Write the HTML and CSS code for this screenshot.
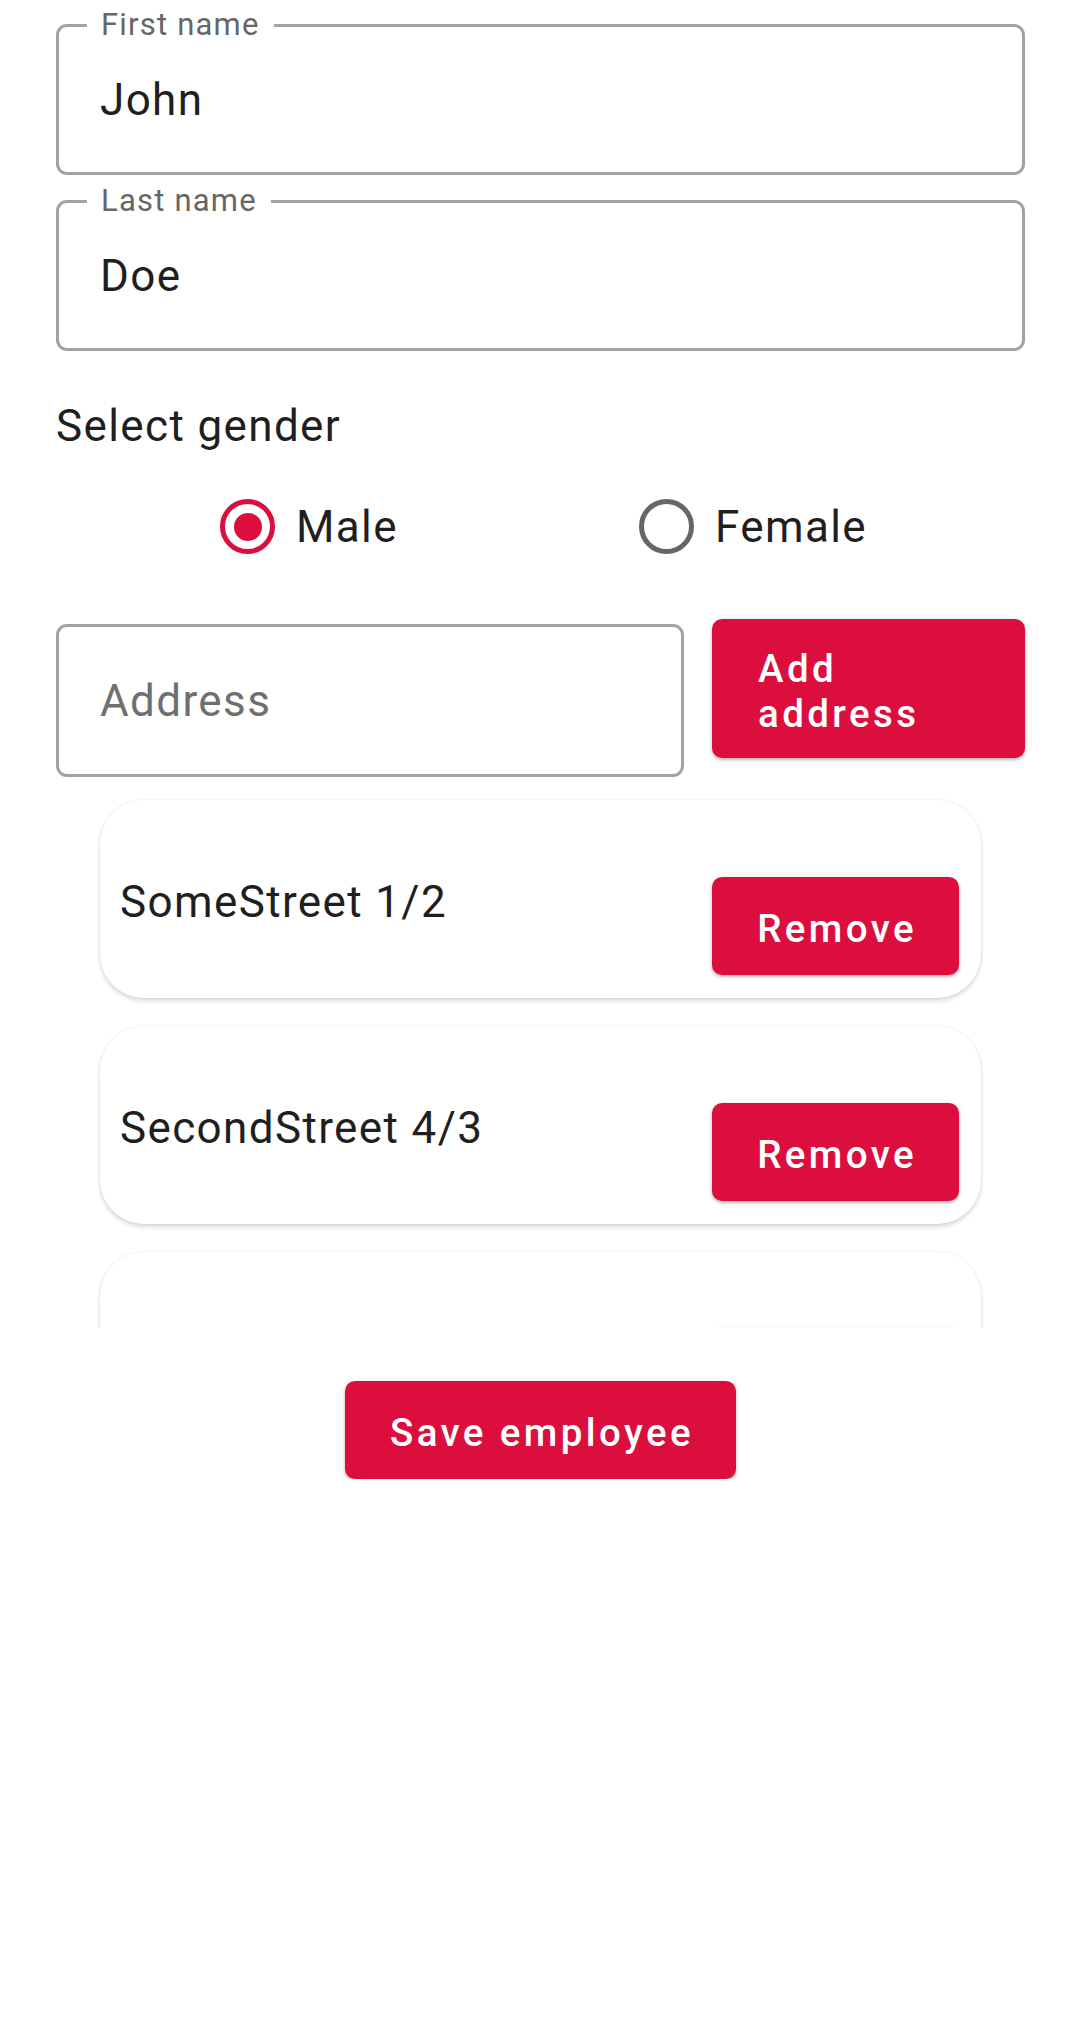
FILE: index.html
```html
<!DOCTYPE html>
<html lang="en">
<head>
<meta charset="utf-8">
<title>Employee form</title>
<link rel="stylesheet" href="styles.css">
</head>
<body>
<main class="form">
  <div class="field">
    <span class="field-label">First name</span>
    <span class="field-value">John</span>
  </div>
  <div class="field">
    <span class="field-label">Last name</span>
    <span class="field-value">Doe</span>
  </div>

  <div class="gender-title">Select gender</div>
  <div class="radio-row">
    <div class="radio-option">
      <span class="radio checked"></span>
      <span class="radio-text">Male</span>
    </div>
    <div class="radio-option">
      <span class="radio"></span>
      <span class="radio-text">Female</span>
    </div>
  </div>

  <div class="address-row">
    <div class="field field-empty">
      <span class="placeholder">Address</span>
    </div>
    <button class="btn btn-add">Add address</button>
  </div>

  <div class="address-list">
    <div class="card">
      <span class="card-text">SomeStreet 1/2</span>
      <button class="btn btn-small">Remove</button>
    </div>
    <div class="card">
      <span class="card-text">SecondStreet 4/3</span>
      <button class="btn btn-small">Remove</button>
    </div>
    <div class="card card-partial">
      <span class="card-text"></span>
      <button class="btn btn-small btn-hidden-part" aria-label="Remove"></button>
    </div>
  </div>

  <div class="save-row">
    <button class="btn btn-small">Save employee</button>
  </div>
</main>
</body>
</html>
```
FILE: styles.css
```css
html, body {
  margin: 0;
  background: #ffffff;
}

body {
  font-family: Roboto, "Noto Sans", "Liberation Sans", sans-serif;
  color: #1f1f1f;
}

.form {
  display: flex;
  flex-direction: column;
  padding: 24px 55px 0 56px;
}

/* Outlined text fields */
.field {
  position: relative;
  box-sizing: border-box;
  height: 151px;
  border: 3px solid #a2a2a2;
  border-radius: 11px;
  display: flex;
  align-items: center;
  padding-left: 41px;
}

.field + .field {
  margin-top: 25px;
}

.field-label {
  position: absolute;
  top: -20px;
  left: 28px;
  padding: 0 14px;
  background: #ffffff;
  font-size: 31px;
  line-height: 36px;
  letter-spacing: 1.2px;
  color: #666666;
}

.field-value,
.placeholder {
  font-size: 44px;
  line-height: 52px;
  letter-spacing: 1.375px;
}

.field-value {
  color: #1f1f1f;
}

.placeholder {
  color: #6f6f6f;
}

/* Gender */
.gender-title {
  margin-top: 49px;
  font-size: 44px;
  line-height: 52px;
  letter-spacing: 1.375px;
  color: #1f1f1f;
}

.radio-row {
  display: grid;
  grid-template-columns: 419px auto;
  align-items: center;
  margin-top: 47px;
  padding-left: 164px;
}

.radio-option {
  display: flex;
  align-items: center;
  gap: 21px;
}

.radio {
  box-sizing: border-box;
  width: 55px;
  height: 55px;
  border: 5px solid #666666;
  border-radius: 50%;
  display: flex;
  align-items: center;
  justify-content: center;
  flex: none;
}

.radio.checked {
  border-color: #dc0e3d;
}

.radio.checked::after {
  content: "";
  width: 28px;
  height: 28px;
  border-radius: 50%;
  background: #dc0e3d;
}

.radio-text {
  font-size: 44px;
  line-height: 52px;
  letter-spacing: 1.375px;
  color: #1f1f1f;
}

/* Address input row */
.address-row {
  display: flex;
  align-items: flex-start;
  gap: 28px;
  margin-top: 65px;
}

.field-empty {
  flex: 1;
  height: 153px;
  margin-top: 5px;
}

/* Buttons */
.btn {
  border: none;
  margin: 0;
  background: #dc0e3d;
  color: #ffffff;
  font-family: Roboto, "Noto Sans", "Liberation Sans", sans-serif;
  font-weight: 500;
  font-size: 38.5px;
  letter-spacing: 3.4px;
  border-radius: 10px;
  box-shadow: 0 2px 3px rgba(0, 0, 0, 0.22), 0 1px 6px rgba(0, 0, 0, 0.10);
  box-sizing: border-box;
  cursor: pointer;
}

.btn-add {
  width: 313px;
  height: 139px;
  flex: none;
  padding: 5px 40px 0 46px;
  text-align: left;
  line-height: 45px;
}

.btn-small {
  height: 98px;
  padding: 5px 42px 0 45px;
  line-height: 45px;
  white-space: nowrap;
  flex: none;
}

.btn-hidden-part {
  width: 246px;
}

/* Address list */
.address-list {
  height: 551px;
  overflow: hidden;
  box-sizing: border-box;
  padding: 23px 44px 0 44px;
  display: flex;
  flex-direction: column;
  gap: 28px;
}

.card {
  flex: none;
  box-sizing: border-box;
  height: 198px;
  padding: 23px 22px 23px 20px;
  border-radius: 44px;
  background: #ffffff;
  box-shadow: 0 3px 4px rgba(0, 0, 0, 0.14), 0 0 3px rgba(0, 0, 0, 0.08);
  display: flex;
  justify-content: space-between;
  align-items: flex-end;
}

.card-text {
  align-self: center;
  margin-top: 6px;
  font-size: 44px;
  line-height: 52px;
  letter-spacing: 1.375px;
  color: #1f1f1f;
}

/* Save */
.save-row {
  display: flex;
  justify-content: center;
  margin-top: 53px;
}
```
